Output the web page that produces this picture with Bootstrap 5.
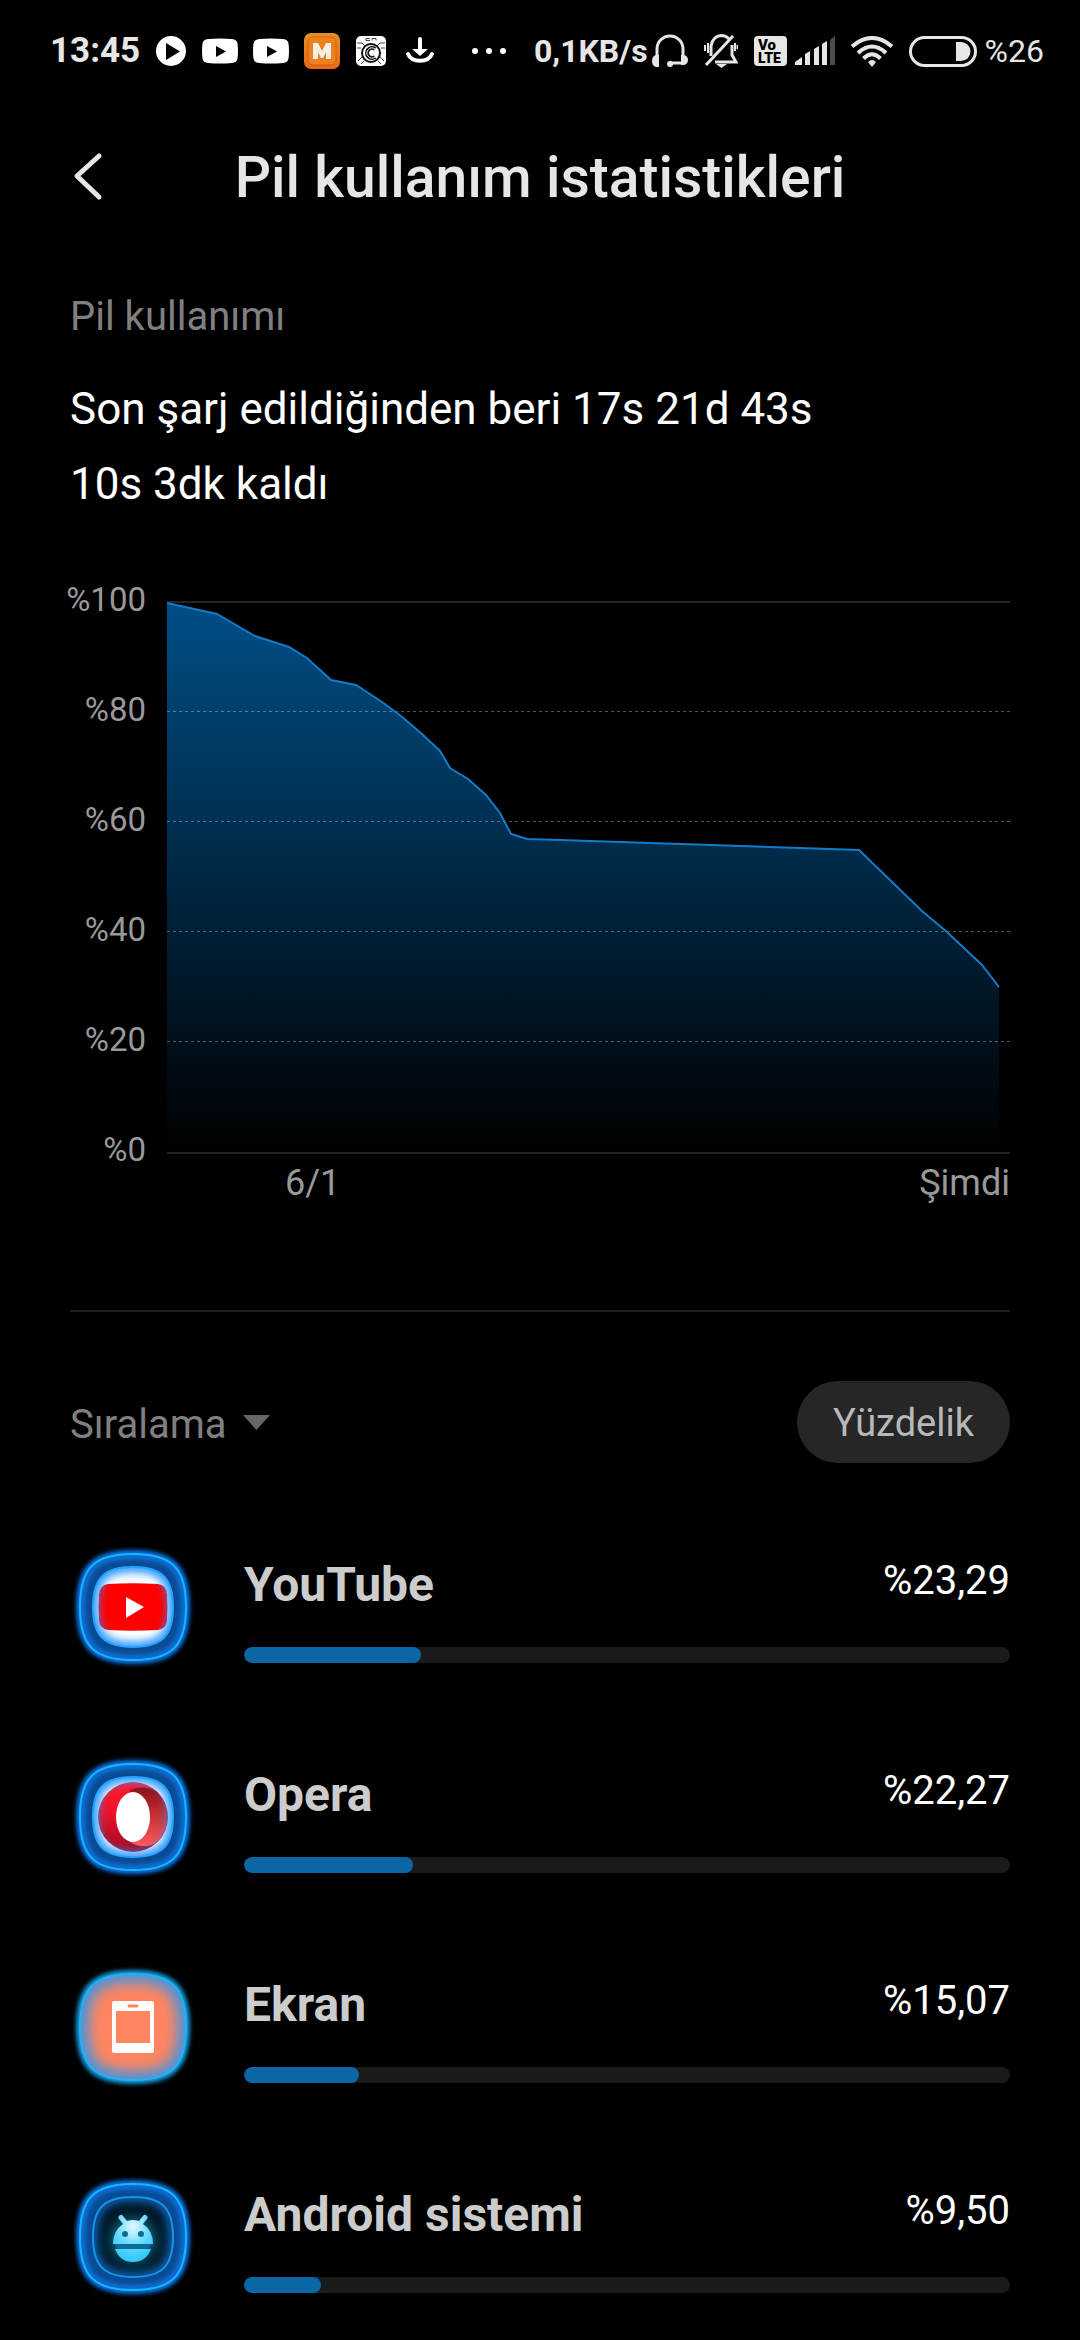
<!DOCTYPE html>
<html lang="tr" data-bs-theme="dark">
<head>
<meta charset="utf-8">
<meta name="viewport" content="width=device-width, initial-scale=1">
<title>Pil kullanım istatistikleri</title>
<link rel="stylesheet" href="https://cdn.jsdelivr.net/npm/bootstrap@5.3.0/dist/css/bootstrap.min.css">
<style>
body{background:#000;color:#fff;font-family:Roboto,"Liberation Sans",sans-serif;font-size:40px;line-height:50px}
.statusbar{height:102px;padding:0 36px 0 50px;color:#e6e6e6;font-size:32px;line-height:40px}
.statusbar svg{flex:none}
.status-left{gap:15px}
.clock{font-size:35px}
.titlebar{height:152px;padding:0 70px}
.titlebar h1{font-size:57px;line-height:70px;font-weight:500;color:#e6e6e6;margin:0 36px 0 0}
.back-btn{width:36px;height:60px;line-height:0}
.page-pad{padding:0 70px}
.section-label{font-size:40px;line-height:50px;color:#808080;padding-top:38px;margin-bottom:30px}
.summary-line{font-size:44px;line-height:75px}
.chart-area{margin-top:58px;color:#999}
.axis-y{gap:70px;font-size:33px;line-height:40px;width:76px;margin-right:21px}
.plot-col{padding-top:21px}
.axis-x{font-size:36px;line-height:40px;padding:9px 0 0 14%}
.divider{height:2px;margin:107px 0 69px;background:#1c1c1c;border:0;opacity:1}
.sort-select{appearance:none;background:transparent;border:0;color:#808080;padding:4px 0 0;line-height:normal}
.pill-btn,.pill-btn:hover{height:82px;padding:0 36px;font-size:38px;line-height:84px;background:#262626;color:#b8b8b8;border:0}
.usage-list{padding-top:37px}
.usage-item{height:210px;padding-top:44px;gap:48px}
.usage-item:last-child{height:auto}
.usage-body{padding-top:13px}
.app-name{font-size:48px;line-height:56px;font-weight:700;color:#ccc}
.usage-value{line-height:48px}
.usage-item .progress{height:16px;margin-top:34px;border-radius:8px;background:#1a1a1a}
.usage-item .progress-bar{border-radius:8px;background:#0a66a5}
</style>
</head>
<body>
<svg width="0" height="0" class="position-absolute" aria-hidden="true">
  <defs>
    <path id="sq" d="M0-53C39-53 53-39 53 0S39 53 0 53-53 39-53 0-39-53 0-53Z"/>
    <path id="sqIn" d="M0-40C29-40 40-29 40 0S29 40 0 40-40 29-40 0-29-40 0-40Z"/>
    <clipPath id="clipOut"><use href="#sq"/></clipPath>
    <clipPath id="clipIn"><use href="#sqIn"/></clipPath>
    <filter id="b2" x="-30%" y="-30%" width="160%" height="160%"><feGaussianBlur stdDeviation="2"/></filter>
    <filter id="b4" x="-30%" y="-30%" width="160%" height="160%"><feGaussianBlur stdDeviation="4"/></filter>
    <filter id="b7" x="-30%" y="-30%" width="160%" height="160%"><feGaussianBlur stdDeviation="7"/></filter>
    <linearGradient id="opL" x1="0" y1="0" x2="0" y2="1"><stop offset="0" stop-color="#ff1b2d"/><stop offset=".4" stop-color="#f01429"/><stop offset="1" stop-color="#a00a22"/></linearGradient>
    <linearGradient id="opR" x1="0" y1="0" x2="0" y2="1"><stop offset="0" stop-color="#8f0d14"/><stop offset="1" stop-color="#ff5a5a"/></linearGradient>
    <radialGradient id="droid" cx=".5" cy=".25" r=".7"><stop offset="0" stop-color="#e4fbff"/><stop offset=".6" stop-color="#5fd8ff"/><stop offset="1" stop-color="#35c8fa"/></radialGradient>
    <symbol id="ringBase" viewBox="-63 -63 126 126">
      <use href="#sq" fill="#0a4a96" stroke="#0b74e8" stroke-width="8" filter="url(#b2)"/>
      <use href="#sq" fill="#0a4a92"/>
      <g clip-path="url(#clipOut)"><use href="#sq" fill="none" stroke="#0b6cd0" stroke-width="11" filter="url(#b2)"/></g>
      <use href="#sq" fill="none" stroke="#14b6ff" stroke-width="2"/>
    </symbol>
    <symbol id="innerGlow" viewBox="-63 -63 126 126">
      <g clip-path="url(#clipIn)"><use href="#sqIn" fill="none" stroke="#2090ff" stroke-width="10" filter="url(#b4)"/></g>
      <use href="#sqIn" fill="none" stroke="#1fa6ff" stroke-width="2"/>
    </symbol>
    <symbol id="ytGlyph" viewBox="0 0 36 25"><path fill="#fff" fill-rule="evenodd" d="M6 0.500Q18-.500 30 .500Q35 1 35.500 5Q36.500 12.500 35.500 20Q35 24 30 24.500Q18 25.500 6 24.500Q1 24 .500 20Q-.500 12.500 .500 5Q1 1 6 .500ZM14 7.500V18.500L24 13Z"/></symbol>
  </defs>
</svg>

<header>
  <div class="statusbar d-flex align-items-center justify-content-between">
    <div class="status-left d-flex align-items-center">
      <span class="fw-bold clock">13:45</span>
      <svg width="32" height="32" viewBox="-1 -1 32 32"><path fill="#fff" fill-rule="evenodd" d="M15 0A15 15 0 1 1 15 30 15 15 0 0 1 15 0ZM10 7V24L24 15.500Z"/></svg>
      <svg width="36" height="26"><use href="#ytGlyph"/></svg>
      <svg width="36" height="26"><use href="#ytGlyph"/></svg>
      <svg width="36" height="36" viewBox="0 0 36 36">
        <defs><linearGradient id="mg" x2="0" y2="1"><stop stop-color="#e2921f"/><stop offset="1" stop-color="#f0651a"/></linearGradient></defs>
        <rect width="36" height="36" rx="7" fill="url(#mg)"/><rect x="4" y="4" width="28" height="28" rx="5" fill="#f0801c" stroke="#c8641b" stroke-width="1"/>
        <path d="M9 26V10H14L18 18 22 10H27V26H22V19L19 25H17L14 19V26Z" fill="#f4efe9"/>
      </svg>
      <svg width="32" height="32" viewBox="-1 -1 32 32">
        <rect width="30" height="30" rx="5" fill="#fff"/><path d="M10 2.500h4m2 2v-2h4v2M10 2.500v2h4M1 7h5l3 3M29 7h-5l-3 3M1 12h4M29 12h-4M2 25l4-4M28 25l-4-4M5 28l3-3M25 28l-3-3" stroke="#444" stroke-width="1" fill="none"/>
        <circle cx="15" cy="17" r="9" fill="#fff" stroke="#111" stroke-width="2"/><path d="M19 13A5 5 0 1 0 19 21" fill="none" stroke="#111" stroke-width="4"/><path d="M19 13A5 5 0 1 0 19 21" fill="none" stroke="#fff" stroke-width="1"/>
      </svg>
      <svg width="36" height="28" viewBox="-4 -1 36 28"><path d="M14 1V13M2 16C6 25 22 25 26 16" fill="none" stroke="#fff" stroke-width="4" stroke-linecap="round"/><path d="M6 11H22L14 18Z" fill="#fff"/></svg>
      <svg width="54" height="10" viewBox="0 0 54 10" fill="#fff"><circle cx="22" cy="5" r="3"/><circle cx="36" cy="5" r="3"/><circle cx="50" cy="5" r="3"/></svg>
    </div>
    <div class="d-flex align-items-center">
      <span class="fw-bold me-1">0,1KB/s</span>
      <svg width="36" height="34" viewBox="0 0 36 34"><path d="M5 22V15A13 13 0 0 1 31 15V29H18" fill="none" stroke="#e6e6e6" stroke-width="3"/><path d="M4 21h3v12H4Q0 32 0 27T4 21ZM32 21h-3v10H32Q36 30 36 26T32 21Z" fill="#e6e6e6"/><circle cx="18" cy="30" r="3" fill="#e6e6e6"/></svg>
      <svg class="ms-3" width="34" height="34" viewBox="0 0 34 34"><g fill="none" stroke="#e6e6e6" stroke-width="2"><path d="M7 22V12Q9 2 17 1.500Q22 1.500 25 5M28 11V21L32 28H11" stroke-width="3"/><path d="M2 31L29 2" stroke-width="3"/><path d="M1 11v6M4 9v10M31 9v8M33.500 11v4"/></g><path d="M12 30H23L17.500 34Z" fill="#e6e6e6"/></svg>
      <svg class="ms-3" width="33" height="30" viewBox="0 0 33 30"><rect width="33" height="30" rx="4" fill="#e6e6e6"/><text x="4" y="14" font-size="15" font-weight="900" fill="#000">Vo</text><text x="4" y="27" font-size="14" font-weight="900" fill="#000">LTE</text></svg>
      <svg class="ms-2" width="40" height="30" viewBox="0 0 40 30"><g fill="#e6e6e6"><path d="M0 29V26L7 21V29ZM10 29V18L15 15V29ZM19 29V13L24 10V29ZM27 29V8L32 5V29Z"/><path d="M35 29V4L40 0V29Z" fill="#4c4c4c"/></g></svg>
      <svg class="ms-3" width="42" height="31" viewBox="0 0 42 31"><g fill="none" stroke="#e6e6e6" stroke-width="4"><path d="M1 10.500Q21-6.500 41 10.500M7 17Q21 4 35 17M12.500 22.500Q21 14 29.500 22.500"/></g><path d="M17 26Q21 22 25 26L21 31Z" fill="#e6e6e6"/></svg>
      <svg class="ms-3" width="68" height="31" viewBox="0 0 68 31"><rect x="1.500" y="1.500" width="65" height="28" rx="14" fill="none" stroke="#e6e6e6" stroke-width="3"/><path d="M47 6h5a9.500 9.500 0 0 1 0 19h-5Z" fill="#e6e6e6"/></svg>
      <span class="ms-2">%26</span>
    </div>
  </div>
  <div class="titlebar d-flex align-items-center">
    <button type="button" class="btn p-0 border-0 back-btn" aria-label="Geri"><svg width="36" height="60" viewBox="0 0 36 60"><path d="M29 8L7 28 29 49" fill="none" stroke="#e6e6e6" stroke-width="5" stroke-linecap="round" stroke-linejoin="round"/></svg></button>
    <h1 class="flex-grow-1 text-center">Pil kullanım istatistikleri</h1>
  </div>
</header>

<main class="page-pad">
  <h2 class="section-label fw-normal">Pil kullanımı</h2>
  <div class="summary-line">Son şarj edildiğinden beri 17s 21d 43s</div>
  <div class="summary-line">10s 3dk kaldı</div>

  <div class="chart-area d-flex align-items-start">
    <div class="axis-y d-flex flex-column align-items-end">
      <span>%100</span><span>%80</span><span>%60</span><span>%40</span><span>%20</span><span>%0</span>
    </div>
    <div class="plot-col flex-grow-1">
      <svg class="d-block w-100" viewBox="0 0 843 553" role="img" aria-label="Pil seviyesi grafiği">
        <defs><linearGradient id="area" x2="0" y2="1"><stop stop-color="#004f87"/><stop offset="1" stop-color="#004f87" stop-opacity="0"/></linearGradient></defs>
        <path d="M0 1H843M0 552H843" stroke="#242424" stroke-width="2"/>
        <path fill="url(#area)" d="M0 2L50 13 69 24 88 35 122 46 140 57 164 79 189 84 215 101 234 115 255 133 273 150 283 167 301 178 319 194 333 212 344 233 360 238 393 239 692 249 755 310 780 331 815 364 832 386V551H0Z"/>
        <path d="M0 110.500H843M0 220.500H843M0 330.500H843M0 440.500H843" stroke="#fff" stroke-opacity=".32" stroke-width="1" stroke-dasharray="3 3"/>
        <path fill="none" stroke="#127bc9" stroke-width="2" d="M0 2L50 13 69 24 88 35 122 46 140 57 164 79 189 84 215 101 234 115 255 133 273 150 283 167 301 178 319 194 333 212 344 233 360 238 393 239 692 249 755 310 780 331 815 364 832 386"/>
      </svg>
      <div class="axis-x d-flex justify-content-between"><span>6/1</span><span>Şimdi</span></div>
    </div>
  </div>

  <hr class="divider">

  <div class="d-flex align-items-center justify-content-between">
    <div class="d-flex align-items-center">
      <select class="sort-select" aria-label="Sıralama"><option>Sıralama</option></select>
      <svg class="ms-3" width="27" height="15" viewBox="0 0 27 15"><path d="M0 0H27L13.500 15Z" fill="#666"/></svg>
    </div>
    <button type="button" class="btn rounded-pill pill-btn">Yüzdelik</button>
  </div>

  <ul class="usage-list list-unstyled m-0">
    <li class="usage-item d-flex align-items-start">
      <svg class="flex-shrink-0" width="126" height="126" viewBox="-63 -63 126 126">
        <use href="#ringBase" x="-63" y="-63" width="126" height="126"/><use href="#sqIn" fill="#fff"/>
        <path d="M-25-23Q0-24.500 25-23Q33-22 34-13Q35 0 34 14Q33 22 25 23Q0 24.500-25 23Q-33 22-34 14Q-35 0-34-13Q-33-22-25-23Z" fill="#f00"/>
        <use href="#innerGlow" x="-63" y="-63" width="126" height="126"/><path d="M-7-10V11L11 0Z" fill="#fff"/>
      </svg>
      <div class="usage-body flex-grow-1">
        <div class="d-flex justify-content-between align-items-start"><span class="app-name">YouTube</span><span class="usage-value">%23,29</span></div>
        <div class="progress" role="progressbar" aria-label="YouTube"><div class="progress-bar" style="width:23.1%"></div></div>
      </div>
    </li>
    <li class="usage-item d-flex align-items-start">
      <svg class="flex-shrink-0" width="126" height="126" viewBox="-63 -63 126 126">
        <use href="#ringBase" x="-63" y="-63" width="126" height="126"/><use href="#sqIn" fill="#fff"/>
        <circle r="35" fill="url(#opL)"/><path d="M-3-27C6-31 17-30 23-26A35 35 0 0 1 23 26C17 30 6 31-3 25Z" fill="url(#opR)"/>
        <use href="#innerGlow" x="-63" y="-63" width="126" height="126"/><ellipse rx="17" ry="25" fill="#fff"/>
      </svg>
      <div class="usage-body flex-grow-1">
        <div class="d-flex justify-content-between align-items-start"><span class="app-name">Opera</span><span class="usage-value">%22,27</span></div>
        <div class="progress" role="progressbar" aria-label="Opera"><div class="progress-bar" style="width:22.1%"></div></div>
      </div>
    </li>
    <li class="usage-item d-flex align-items-start">
      <svg class="flex-shrink-0" width="126" height="126" viewBox="-63 -63 126 126">
        <use href="#sq" fill="#159be0" stroke="#159be0" stroke-width="8" filter="url(#b2)"/><use href="#sq" fill="#ff8460"/>
        <g clip-path="url(#clipOut)"><use href="#sq" fill="none" stroke="#2a96ee" stroke-width="15" filter="url(#b7)"/></g>
        <use href="#sq" fill="none" stroke="#1cb4f7" stroke-width="2"/>
        <path fill="#fff" fill-rule="evenodd" d="M-19-26H19Q21-26 21-24V24Q21 26 19 26H-19Q-21 26-21 24V-24Q-21-26-19-26ZM-17-16V16H17V-16ZM-4-22.500A1.500 1.500 0 0 0-4-19.500H4A1.500 1.500 0 0 0 4-22.500Z"/>
      </svg>
      <div class="usage-body flex-grow-1">
        <div class="d-flex justify-content-between align-items-start"><span class="app-name">Ekran</span><span class="usage-value">%15,07</span></div>
        <div class="progress" role="progressbar" aria-label="Ekran"><div class="progress-bar" style="width:15%"></div></div>
      </div>
    </li>
    <li class="usage-item d-flex align-items-start">
      <svg class="flex-shrink-0" width="126" height="126" viewBox="-63 -63 126 126">
        <use href="#ringBase" x="-63" y="-63" width="126" height="126"/><use href="#sqIn" fill="#031420"/>
        <g clip-path="url(#clipIn)"><use href="#sqIn" fill="none" stroke="#0a5fb0" stroke-width="10" filter="url(#b4)"/><circle cy="3" r="22" fill="#0d6f8e" filter="url(#b7)"/></g>
        <use href="#sqIn" fill="none" stroke="#1296ee" stroke-width="2"/>
        <circle cy="3" r="18" fill="#0b6d94"/>
        <path d="M-20 7A20 22 0 0 1-10-13L-14-18A2 2 0 0 1-10-21L-6-16A20 20 0 0 1 6-16L10-21A2 2 0 0 1 14-18L10-13A20 22 0 0 1 20 7ZM-18 12H18Q13 25 0 25T-18 12Z" fill="url(#droid)"/>
        <circle cx="-8" cy="-3" r="3" fill="#0b6d94"/><circle cx="8" cy="-3" r="3" fill="#0b6d94"/>
      </svg>
      <div class="usage-body flex-grow-1">
        <div class="d-flex justify-content-between align-items-start"><span class="app-name">Android sistemi</span><span class="usage-value">%9,50</span></div>
        <div class="progress" role="progressbar" aria-label="Android sistemi"><div class="progress-bar" style="width:10%"></div></div>
      </div>
    </li>
  </ul>
</main>
<script src="https://cdn.jsdelivr.net/npm/bootstrap@5.3.0/dist/js/bootstrap.bundle.min.js"></script>
</body>
</html>
